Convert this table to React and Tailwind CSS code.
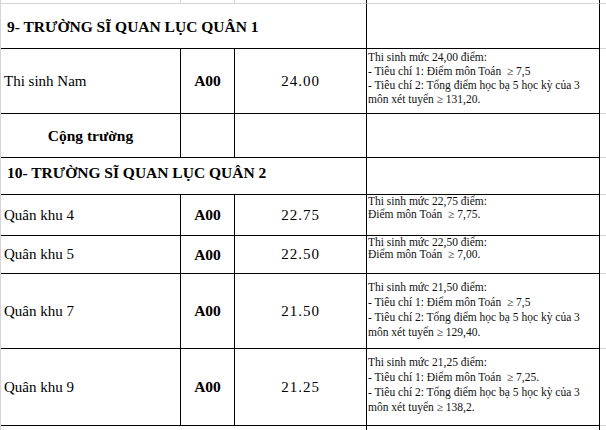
import React from 'react';

const serif = 'font-[Liberation_Serif,Times_New_Roman,serif] text-black';

// cell widths include their 1px right border
const C1 = 'w-[180px] shrink-0 border-r border-b border-black';
const C2 = 'w-[54px] shrink-0 border-r border-b border-black';
const C3 = 'w-[132px] shrink-0 border-r border-b border-black';
const C4 = 'w-[233px] shrink-0 border-r border-b border-black';
const WIDE = 'w-[366px] shrink-0 border-r border-b border-black';
const EXTRA = 'flex-1 border-b border-[#d4d4d4]';

function Note({ lines, className }) {
  return (
    <div className={`${C4} pl-[1px] text-[11.5px] text-[#111] whitespace-pre overflow-hidden ${className}`}>
      {lines.map((l, i) => (
        <div key={i}>{l}</div>
      ))}
    </div>
  );
}

function ScoreRow({ h, name, score, notes, noteClass }) {
  return (
    <div className={`flex ${h}`}>
      <div className={`${C1} flex items-center pl-[3px] text-[15px]`}>{name}</div>
      <div className={`${C2} flex items-center justify-center font-bold text-[15.5px]`}>A00</div>
      <div className={`${C3} flex items-center justify-center text-[15px] tracking-[1px]`}>{score}</div>
      <Note lines={notes} className={noteClass} />
      <div className={EXTRA} />
    </div>
  );
}

function Header({ h, title, pad }) {
  return (
    <div className={`flex ${h}`}>
      <div className={`${WIDE} flex items-center pl-[6px] font-bold text-[15.5px] ${pad}`}>{title}</div>
      <div className={C4} />
      <div className={EXTRA} />
    </div>
  );
}

export default function App() {
  return (
    <div className={`w-[606px] h-[430px] overflow-hidden bg-white border-l border-[#d4d4d4] ${serif}`}>
      {/* tail of the previous spreadsheet row */}
      <div className="flex h-[4px]">
        <div className="w-[180px] shrink-0 border-r border-b border-[#d4d4d4]" />
        <div className="w-[54px] shrink-0 border-r border-b border-[#d4d4d4]" />
        <div className="w-[132px] shrink-0 border-r border-black border-b-[#d4d4d4] border-b" />
        <div className="w-[233px] shrink-0 border-r border-black border-b-[#d4d4d4] border-b" />
        <div className={EXTRA} />
      </div>

      <Header h="h-[45px]" title="9- TRƯỜNG SĨ QUAN LỤC QUÂN 1" pad="pt-[1px]" />

      <ScoreRow
        h="h-[65px]"
        name="Thi sinh Nam"
        score="24.00"
        noteClass="pt-[1px] leading-[14px]"
        notes={[
          'Thi sinh mức 24,00 điểm:',
          '- Tiêu chí 1: Điểm môn Toán  ≥ 7,5',
          '- Tiêu chí 2: Tổng điểm học bạ 5 học kỳ của 3',
          'môn xét tuyển ≥ 131,20.',
        ]}
      />

      <div className="flex h-[44px]">
        <div className={`${C1} flex items-center justify-center font-bold text-[15.5px]`}>Cộng trường</div>
        <div className={C2} />
        <div className={C3} />
        <div className={C4} />
        <div className={EXTRA} />
      </div>

      <Header h="h-[37px]" title="10- TRƯỜNG SĨ QUAN LỤC QUÂN 2" pad="pb-[6px]" />

      <ScoreRow
        h="h-[41px]"
        name="Quân khu 4"
        score="22.75"
        noteClass="leading-[13px]"
        notes={['Thi sinh mức 22,75 điểm:', 'Điểm môn Toán  ≥ 7,75.']}
      />

      <ScoreRow
        h="h-[38px]"
        name="Quân khu 5"
        score="22.50"
        noteClass="leading-[12px]"
        notes={['Thi sinh mức 22,50 điểm:', 'Điểm môn Toán  ≥ 7,00.']}
      />

      <ScoreRow
        h="h-[75px]"
        name="Quân khu 7"
        score="21.50"
        noteClass="pt-[6px] leading-[15px]"
        notes={[
          'Thi sinh mức 21,50 điểm:',
          '- Tiêu chí 1: Điểm môn Toán  ≥ 7,5',
          '- Tiêu chí 2: Tổng điểm học bạ 5 học kỳ của 3',
          'môn xét tuyển ≥ 129,40.',
        ]}
      />

      <ScoreRow
        h="h-[77px]"
        name="Quân khu 9"
        score="21.25"
        noteClass="pt-[6px] leading-[15px]"
        notes={[
          'Thi sinh mức 21,25 điểm:',
          '- Tiêu chí 1: Điểm môn Toán  ≥ 7,25.',
          '- Tiêu chí 2: Tổng điểm học bạ 5 học kỳ của 3',
          'môn xét tuyển ≥ 138,2.',
        ]}
      />

      {/* start of the next section */}
      <div className="flex h-[4px]">
        <div className="w-[366px] shrink-0 border-r border-black" />
        <div className="w-[233px] shrink-0 border-r border-black" />
        <div className="flex-1" />
      </div>
    </div>
  );
}
